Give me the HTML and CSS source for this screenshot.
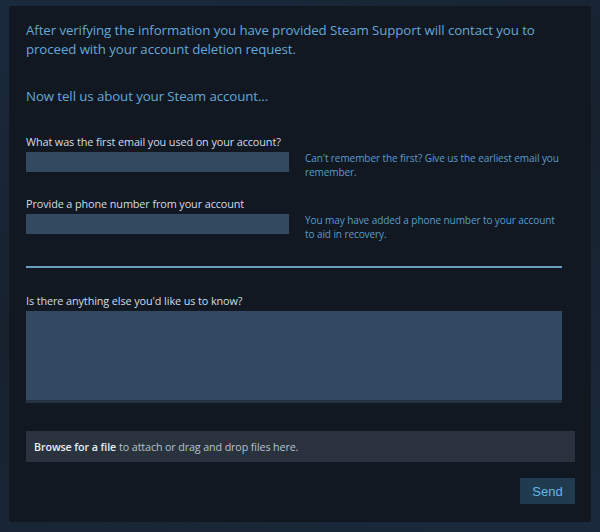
FILE: index.html
```html
<!DOCTYPE html>
<html lang="en">
<head>
<meta charset="utf-8">
<title>Steam Support</title>
<link rel="stylesheet" href="styles.css">
</head>
<body>
<div class="panel">
  <p class="intro">After verifying the information you have provided Steam Support will contact you to proceed with your account deletion request.</p>
  <p class="subhead">Now tell us about your Steam account...</p>

  <div class="field">
    <label class="label">What was the first email you used on your account?</label>
    <div class="row">
      <div class="input"></div>
      <div class="hint">Can't remember the first? Give us the earliest email you remember.</div>
    </div>
  </div>

  <div class="field field-2">
    <label class="label">Provide a phone number from your account</label>
    <div class="row">
      <div class="input"></div>
      <div class="hint">You may have added a phone number to your account to aid in recovery.</div>
    </div>
  </div>

  <div class="divider"></div>

  <label class="label label-3">Is there anything else you'd like us to know?</label>
  <div class="textarea"></div>

  <div class="dropzone"><b>Browse for a file</b> to attach or drag and drop files here.</div>

  <div class="actions"><button class="send">Send</button></div>
</div>
</body>
</html>
```
FILE: styles.css
```css
html, body {
  margin: 0;
  padding: 0;
}
body {
  width: 600px;
  height: 532px;
  background: linear-gradient(160deg, #1a2a3d 0%, #17212e 45%, #1a2a3c 100%);
  font-family: "Open Sans", "Liberation Sans", sans-serif;
  overflow: hidden;
  padding-top: 6px;
  box-sizing: border-box;
}
.panel {
  margin-left: 9px;
  width: 582px;
  height: 516px;
  box-sizing: border-box;
  background: #111821;
  padding: 15px 16px 0 17px;
}
.intro {
  margin: 0;
  font-size: 13.3px;
  line-height: 19px;
  color: #67a7d6;
  width: 540px;
  letter-spacing: -0.1px;
}
.subhead {
  margin: 28px 0 0;
  font-size: 13.3px;
  line-height: 19px;
  color: #67a7d6;
  letter-spacing: -0.1px;
}
.field {
  margin-top: 28px;
}
.field-2 {
  margin-top: 17px;
}
.label {
  display: block;
  font-size: 10.85px;
  line-height: 16px;
  color: #d2dde6;
  letter-spacing: -0.1px;
}
.row {
  display: flex;
  gap: 16px;
  margin-top: 2px;
}
.input {
  width: 263px;
  height: 20px;
  background: #334960;
  flex: none;
}
.hint {
  margin-top: -1px;
  width: 258px;
  font-size: 10.05px;
  line-height: 14px;
  color: #5a9ccc;
  letter-spacing: -0.1px;
}
.divider {
  margin-top: 25px;
  width: 536px;
  height: 2px;
  background: #6a9fc2;
}
.label-3 {
  margin-top: 25px;
}
.textarea {
  margin-top: 2px;
  width: 536px;
  height: 89px;
  background: #324961;
  border-bottom: 3px solid #253244;
}
.dropzone {
  margin-top: 28px;
  height: 31px;
  box-sizing: border-box;
  padding: 0 8px;
  background: #29323d;
  display: flex;
  align-items: center;
  font-size: 10.7px;
  color: #b5c2cd;
  letter-spacing: -0.1px;
}
.dropzone b {
  color: #e8eef3;
  font-weight: 600;
  margin-right: 3px;
}
.actions {
  display: flex;
  justify-content: flex-end;
  margin-top: 16px;
}
.send {
  width: 55px;
  height: 26px;
  border: none;
  background: #203a50;
  color: #67b5e6;
  font-family: "Liberation Sans", sans-serif;
  font-size: 13px;
  padding: 0;
  cursor: pointer;
}
```
